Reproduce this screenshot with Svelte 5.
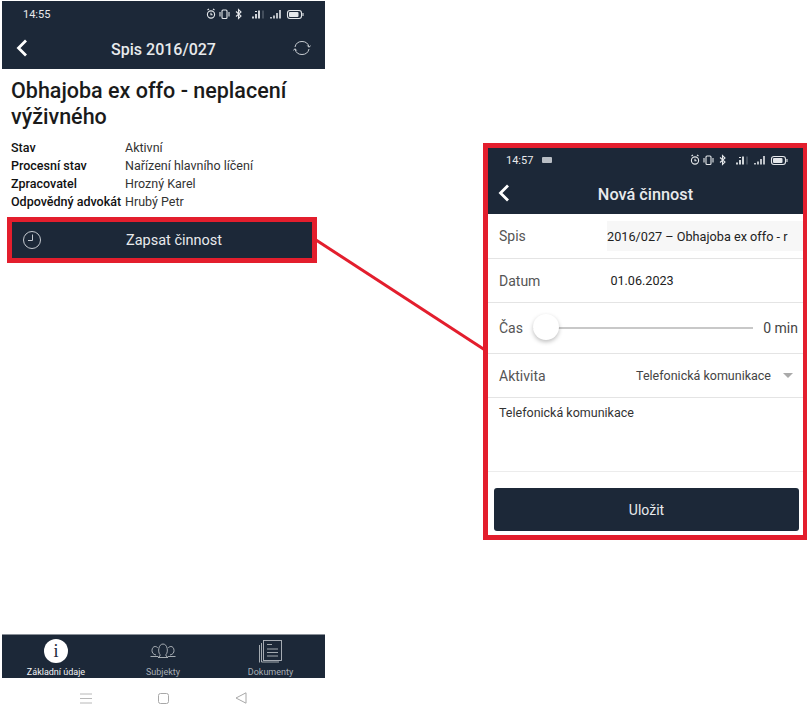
<script>
  let details = [
    { label: 'Stav', value: 'Aktivní' },
    { label: 'Procesní stav', value: 'Nařízení hlavního líčení' },
    { label: 'Zpracovatel', value: 'Hrozný Karel' },
    { label: 'Odpovědný advokát', value: 'Hrubý Petr' }
  ];
</script>

{#snippet statusIcons()}
  <svg class="status-icons" width="100" height="12" viewBox="0 0 100 12" fill="none" stroke="#e4e7ea" stroke-width="1.1">
    <circle cx="6" cy="6.5" r="3.6" />
    <path d="M6 4.800V6.800H7.600M2.500 2L4 1M9.500 2L8 1" />
    <rect x="17" y="2" width="5" height="8.500" rx="1" />
    <path d="M15 4V8.500M24 4V8.500" />
    <path d="M31 3.500L36 8L33.500 10.500V1.500L36 4L31 8.500" />
    <path d="M48 10.500V8.500M51 10.500V6M54 10.500V2.500" stroke-width="1.800" />
    <path d="M50 3.500H52" stroke-width="1.200" />
    <path d="M58 10.500V2.500" stroke="#6a7480" stroke-width="1" />
    <path d="M66 10.500V9M69 10.500V7.500M72 10.500V5M75 10.500V2" stroke-width="1.600" />
    <rect x="82.500" y="2.500" width="14" height="8" rx="2.500" />
    <rect x="84" y="4" width="9.500" height="5" rx="1" fill="#e4e7ea" stroke="none" />
    <path d="M98 5V8" />
  </svg>
{/snippet}

{#snippet backArrow()}
  <svg class="back" width="12" height="18" viewBox="0 0 12 18" fill="none" stroke="#fff" stroke-width="2.800">
    <path d="M10 1.500L2.500 9L10 16.500" />
  </svg>
{/snippet}

<main class="page">
  <section class="phone">
    <header class="bar">
      <div class="status">
        <span class="time">14:55</span>
        {@render statusIcons()}
      </div>
      <div class="nav-row">
        {@render backArrow()}
        <h2>Spis 2016/027</h2>
        <svg class="refresh" width="18" height="18" viewBox="0 0 18 18" fill="none" stroke="#c9ced3" stroke-width="1">
          <path d="M2 8A7.200 7.200 0 0 1 16 8M16 10A7.200 7.200 0 0 1 2 10" />
          <path d="M14.300 6.500L16 8.300L17.700 6.500M0.300 11.500L2 9.700L3.700 11.500" />
        </svg>
      </div>
    </header>

    <div class="content">
      <h1>Obhajoba ex offo - neplacení výživného</h1>
      <dl class="details">
        {#each details as row}
          <dt>{row.label}</dt>
          <dd>{row.value}</dd>
        {/each}
      </dl>
    </div>

    <div class="log-frame">
      <button class="log-button">
        <svg width="20" height="20" viewBox="0 0 20 20" fill="none" stroke="#c4c9cf" stroke-width="1">
          <circle cx="10" cy="10" r="8.500" />
          <path d="M10.500 4.500V10.500H6" />
        </svg>
        <span>Zapsat činnost</span>
      </button>
    </div>

    <nav class="tabs">
      <div class="tab active">
        <span class="tab-icon"><span class="info">i</span></span>
        <span class="tab-label">Základní údaje</span>
      </div>
      <div class="tab">
        <span class="tab-icon">
          <svg width="26" height="16" viewBox="0 0 26 16" fill="none" stroke="#b4bac0" stroke-width="0.900">
            <path d="M10 11.500C7.500 9 8.500 1 13 1C17.500 1 18.500 9 16 11.500V13L18 14.500H8L10 13Z" />
            <path d="M6 12C3 11.500 2 9.500 2 7.500C2 5 3.500 3.500 5 3.500C6.200 3.500 7.200 4 7.800 5M20 12C23 11.500 24 9.500 24 7.500C24 5 22.500 3.500 21 3.500C19.800 3.500 18.800 4 18.200 5" />
            <path d="M0.500 13.500H8M18 13.500H25.500" />
          </svg>
        </span>
        <span class="tab-label">Subjekty</span>
      </div>
      <div class="tab">
        <span class="tab-icon">
          <svg width="23" height="23" viewBox="0 0 23 23" fill="none" stroke="#b4bac0" stroke-width="0.900">
            <rect x="4.500" y="0.500" width="18" height="20" />
            <path d="M2.500 3V22H20M0.500 5V22.500" />
            <path d="M8 4.500H13M8 9H19M8 12.500H19M8 16H19" />
          </svg>
        </span>
        <span class="tab-label">Dokumenty</span>
      </div>
    </nav>

    <div class="soft-keys">
      <svg width="12" height="11" viewBox="0 0 12 11" fill="none" stroke="#b8b8b8"><path d="M0 1H12M0 5.500H12M0 10H12" /></svg>
      <svg width="11" height="11" viewBox="0 0 11 11" fill="none" stroke="#a8a8a8"><rect x="0.500" y="0.500" width="10" height="10" rx="2" /></svg>
      <svg width="12" height="12" viewBox="0 0 12 12" fill="none" stroke="#a8a8a8"><path d="M11 0.800V11.200L1 6Z" /></svg>
    </div>
  </section>

  <section class="activity">
    <header class="bar">
      <div class="status">
        <span class="time">14:57</span>
        <span class="chip"></span>
        {@render statusIcons()}
      </div>
      <div class="nav-row">
        {@render backArrow()}
        <h2>Nová činnost</h2>
      </div>
    </header>

    <div class="row spis-row">
      <span class="field">Spis</span>
      <span class="spis-value">2016/027 – Obhajoba ex offo - r</span>
    </div>
    <div class="row">
      <span class="field">Datum</span>
      <span class="date">01.06.2023</span>
    </div>
    <div class="row time-row">
      <span class="field">Čas</span>
      <div class="slider"><span class="knob"></span></div>
      <span class="minutes">0 min</span>
    </div>
    <div class="row">
      <span class="field">Aktivita</span>
      <span class="select-value">Telefonická komunikace</span>
      <span class="caret"></span>
    </div>
    <div class="note">Telefonická komunikace</div>
    <div class="actions">
      <button class="save">Uložit</button>
    </div>
  </section>

  <svg class="connector" width="808" height="714" viewBox="0 0 808 714">
    <path d="M316 240L485 350" stroke="#e31e2d" stroke-width="3" />
  </svg>
</main>

<style>
  :global(body) {
    margin: 0;
    background: #fff;
  }

  .page {
    position: relative;
    display: flex;
    justify-content: space-between;
    align-items: flex-start;
    width: 808px;
    height: 714px;
    overflow: hidden;
    font-family: Roboto, "Liberation Sans", sans-serif;
    color: #111;
  }

  /* Left phone */
  .phone {
    display: flex;
    flex-direction: column;
    width: 323px;
    height: 713px;
    margin: 1px 0 0 2px;
  }

  .bar {
    display: flex;
    flex-direction: column;
    flex-shrink: 0;
    height: 68px;
    background: #1c2838;
    color: #e8eaec;
  }

  .status {
    display: flex;
    align-items: center;
    height: 27px;
    padding: 0 20px 0 21px;
  }

  .time {
    font-size: 11px;
    color: #e8eaec;
  }

  .status-icons {
    margin-left: auto;
  }

  .nav-row {
    position: relative;
    display: flex;
    align-items: center;
    justify-content: center;
    height: 41px;
    margin-top: 2px;
  }

  .nav-row h2 {
    margin: 0;
    font-size: 16px;
    font-weight: 500;
  }

  .back {
    position: absolute;
    left: 14px;
    top: 10px;
  }

  .refresh {
    position: absolute;
    right: 14px;
    top: 10px;
  }

  .content {
    padding: 9px 9px 0;
  }

  h1 {
    margin: 0 0 9px;
    font-size: 21.500px;
    line-height: 26px;
    font-weight: 500;
    color: #1a1a1a;
  }

  .details {
    display: grid;
    grid-template-columns: 114px 1fr;
    margin: 0;
    font-size: 12.500px;
    line-height: 18px;
  }

  dt {
    font-weight: 500;
    white-space: nowrap;
  }

  dd {
    margin: 0;
    color: #333;
  }

  .log-frame {
    margin: 6px 8px 0 5px;
    border: 5px solid #e31e2d;
  }

  .log-button {
    position: relative;
    display: flex;
    align-items: center;
    justify-content: center;
    width: 100%;
    height: 36px;
    padding: 0 0 0 24px;
    border: none;
    background: #1c2838;
    color: #e8eaec;
    font: 400 14.500px Roboto, sans-serif;
  }

  .log-button svg {
    position: absolute;
    left: 10px;
    top: 8px;
  }

  .tabs {
    display: grid;
    grid-template-columns: 108px 106px 109px;
    flex-shrink: 0;
    height: 44px;
    margin-top: auto;
    background: #1c2838;
    border-top: 1px solid #8a9098;
    box-sizing: border-box;
  }

  .tab {
    display: flex;
    flex-direction: column;
    align-items: center;
    gap: 4px;
    padding-top: 4px;
  }

  .tab-icon {
    display: flex;
    align-items: center;
    justify-content: center;
    height: 24px;
  }

  .tab-label {
    font-size: 9px;
    line-height: 11px;
    color: #a9afb6;
  }

  .active .tab-label {
    color: #f4f5f6;
  }

  .info {
    display: flex;
    align-items: center;
    justify-content: center;
    width: 24px;
    height: 24px;
    border-radius: 50%;
    background: #fff;
    color: #1c2838;
    font: 400 18px "Liberation Serif", serif;
  }

  .soft-keys {
    display: flex;
    align-items: center;
    flex-shrink: 0;
    box-sizing: border-box;
    height: 36px;
    padding: 4px 0 0 78px;
    gap: 66px;
  }

  /* Right phone */
  .activity {
    display: flex;
    flex-direction: column;
    box-sizing: border-box;
    width: 324px;
    height: 397px;
    margin: 143px 1px 0 0;
    border: 5px solid #e31e2d;
    border-right-width: 4px;
  }

  .activity .bar {
    height: 66px;
  }

  .activity .status {
    height: 25px;
    padding: 0 14px 0 18px;
  }

  .activity .back {
    left: 10px;
  }

  .activity h2 {
    font-size: 16.300px;
  }

  .chip {
    width: 10px;
    height: 6px;
    margin-left: 9px;
    border-radius: 1px;
    background: #b9bec4;
  }

  .row {
    display: flex;
    align-items: center;
    flex-shrink: 0;
    height: 44px;
    box-sizing: border-box;
    padding-left: 11px;
    border-bottom: 1px solid #e4e4e4;
    font-size: 13px;
  }

  .spis-row {
    height: 45px;
  }

  .field {
    font-size: 14px;
    color: #555;
  }

  .spis-value {
    display: flex;
    align-items: center;
    box-sizing: border-box;
    width: 196px;
    height: 30px;
    margin-left: auto;
    padding-right: 15px;
    background: #f7f7f7;
    color: #222;
    white-space: nowrap;
    font-size: 12.700px;
  }

  .date {
    margin-left: 70px;
    font-size: 12.600px;
    color: #222;
  }

  .time-row {
    height: 51px;
  }

  .slider {
    position: relative;
    flex: 1;
    height: 2px;
    margin-left: 10px;
    background: #c8c8c8;
  }

  .knob {
    position: absolute;
    left: 0;
    top: -13px;
    width: 26px;
    height: 26px;
    border-radius: 50%;
    background: #fff;
    box-shadow: 0 2px 4px rgba(0, 0, 0, 0.25);
  }

  .minutes {
    margin: 0 5px 0 10px;
    font-size: 14px;
    color: #444;
  }

  .select-value {
    margin-left: auto;
    font-size: 12.500px;
    color: #444;
  }

  .caret {
    width: 0;
    height: 0;
    margin: 0 10px 0 12px;
    border-left: 5px solid transparent;
    border-right: 5px solid transparent;
    border-top: 5px solid #aaa;
  }

  .note {
    flex-shrink: 0;
    height: 74px;
    box-sizing: border-box;
    padding: 7px 11px 0;
    border-bottom: 1px solid #ececec;
    font-size: 12.500px;
    line-height: 15px;
    color: #333;
  }

  .actions {
    padding: 16px 4px 0 6px;
  }

  .save {
    display: block;
    width: 100%;
    height: 43px;
    padding: 0;
    border: none;
    border-radius: 3px;
    background: #1c2838;
    color: #e8eaec;
    font: 400 14px Roboto, sans-serif;
  }

  .connector {
    position: absolute;
    left: 0;
    top: 0;
    pointer-events: none;
  }
</style>
